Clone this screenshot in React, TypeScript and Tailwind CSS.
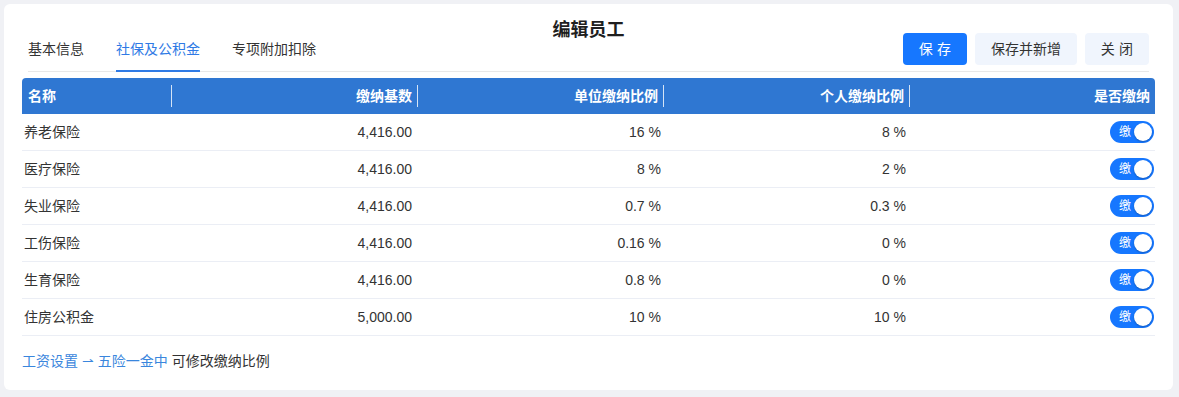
import React from "react";

const rows = [
  { name: "养老保险", base: "4,416.00", unit: "16 %", person: "8 %" },
  { name: "医疗保险", base: "4,416.00", unit: "8 %", person: "2 %" },
  { name: "失业保险", base: "4,416.00", unit: "0.7 %", person: "0.3 %" },
  { name: "工伤保险", base: "4,416.00", unit: "0.16 %", person: "0 %" },
  { name: "生育保险", base: "4,416.00", unit: "0.8 %", person: "0 %" },
  { name: "住房公积金", base: "5,000.00", unit: "10 %", person: "10 %" },
];

function HeadCell({ label, align, sep }: { label: string; align: "left" | "right"; sep: boolean }) {
  return (
    <div className="flex items-center h-full">
      <div className={`flex-1 pl-[6px] pr-[5px] ${align === "right" ? "text-right" : "text-left"}`}>{label}</div>
      {sep ? <div className="w-px h-[22px] bg-white/80" /> : <div className="w-px" />}
    </div>
  );
}

function Toggle() {
  return (
    <div className="w-[44px] h-[22px] rounded-full bg-[#1677ff] flex items-center justify-between pl-[9px] pr-[2px]">
      <span className="text-[12px] leading-none text-white">缴</span>
      <span className="w-[18px] h-[18px] rounded-full bg-white shadow-[0_1px_2px_rgba(0,0,0,0.25)]" />
    </div>
  );
}

export default function App() {
  return (
    <div
      className="w-[1179px] h-[397px] bg-[#f0f1f5] p-[4px] pr-[6px]"
      style={{ fontFamily: '"Liberation Sans", "Noto Sans CJK SC", sans-serif' }}
    >
      <div className="bg-white rounded-[6px] h-[386px] px-[18px] flex flex-col">
        <div className="mx-[6px] h-[68px] grid grid-cols-[1fr_auto_1fr] border-b border-[#e8e8e8]">
          <div className="self-end flex gap-[32px] text-[14px] leading-5 text-[#333]">
            <div className="pb-[11px]">基本信息</div>
            <div className="pb-[11px] -mb-px border-b-2 border-[#2f7ae5] text-[#2f7ae5]">社保及公积金</div>
            <div className="pb-[11px]">专项附加扣除</div>
          </div>
          <div className="self-start mt-[14px] text-[18px] leading-6 font-bold text-[#1f1f1f]">编辑员工</div>
          <div className="self-end justify-self-end mb-[6px] flex gap-[8px] text-[14px]">
            <button className="w-[64px] h-[32px] rounded-[4px] bg-[#1677ff] text-white tracking-[0.3em] pl-[4px]">保存</button>
            <button className="w-[102px] h-[32px] rounded-[4px] bg-[#f0f5fd] text-[#333]">保存并新增</button>
            <button className="w-[64px] h-[32px] rounded-[4px] bg-[#f0f5fd] text-[#333] tracking-[0.3em] pl-[4px]">关闭</button>
          </div>
        </div>

        <div className="mt-[6px]">
          <div className="grid grid-cols-[150px_246px_246px_246px_246px] h-[36px] bg-[#2f77d2] rounded-t-[4px] text-white text-[14px] font-bold">
            <HeadCell label="名称" align="left" sep />
            <HeadCell label="缴纳基数" align="right" sep />
            <HeadCell label="单位缴纳比例" align="right" sep />
            <HeadCell label="个人缴纳比例" align="right" sep />
            <HeadCell label="是否缴纳" align="right" sep={false} />
          </div>
          {rows.map((r) => (
            <div
              key={r.name}
              className="grid grid-cols-[150px_246px_246px_246px_246px] h-[37px] items-center border-b border-[#ebeef5] text-[14px] text-[#333]"
            >
              <div className="pl-[2px]">{r.name}</div>
              <div className="text-right pr-[6px]">{r.base}</div>
              <div className="text-right pr-[3px]">{r.unit}</div>
              <div className="text-right pr-[4px]">{r.person}</div>
              <div className="flex justify-end pr-[2px]">
                <Toggle />
              </div>
            </div>
          ))}
        </div>

        <div className="mt-[15px] text-[14px] leading-5 text-[#333]">
          <span className="text-[#3a86dd]">工资设置 ⇀ 五险一金中</span> 可修改缴纳比例
        </div>
      </div>
    </div>
  );
}
